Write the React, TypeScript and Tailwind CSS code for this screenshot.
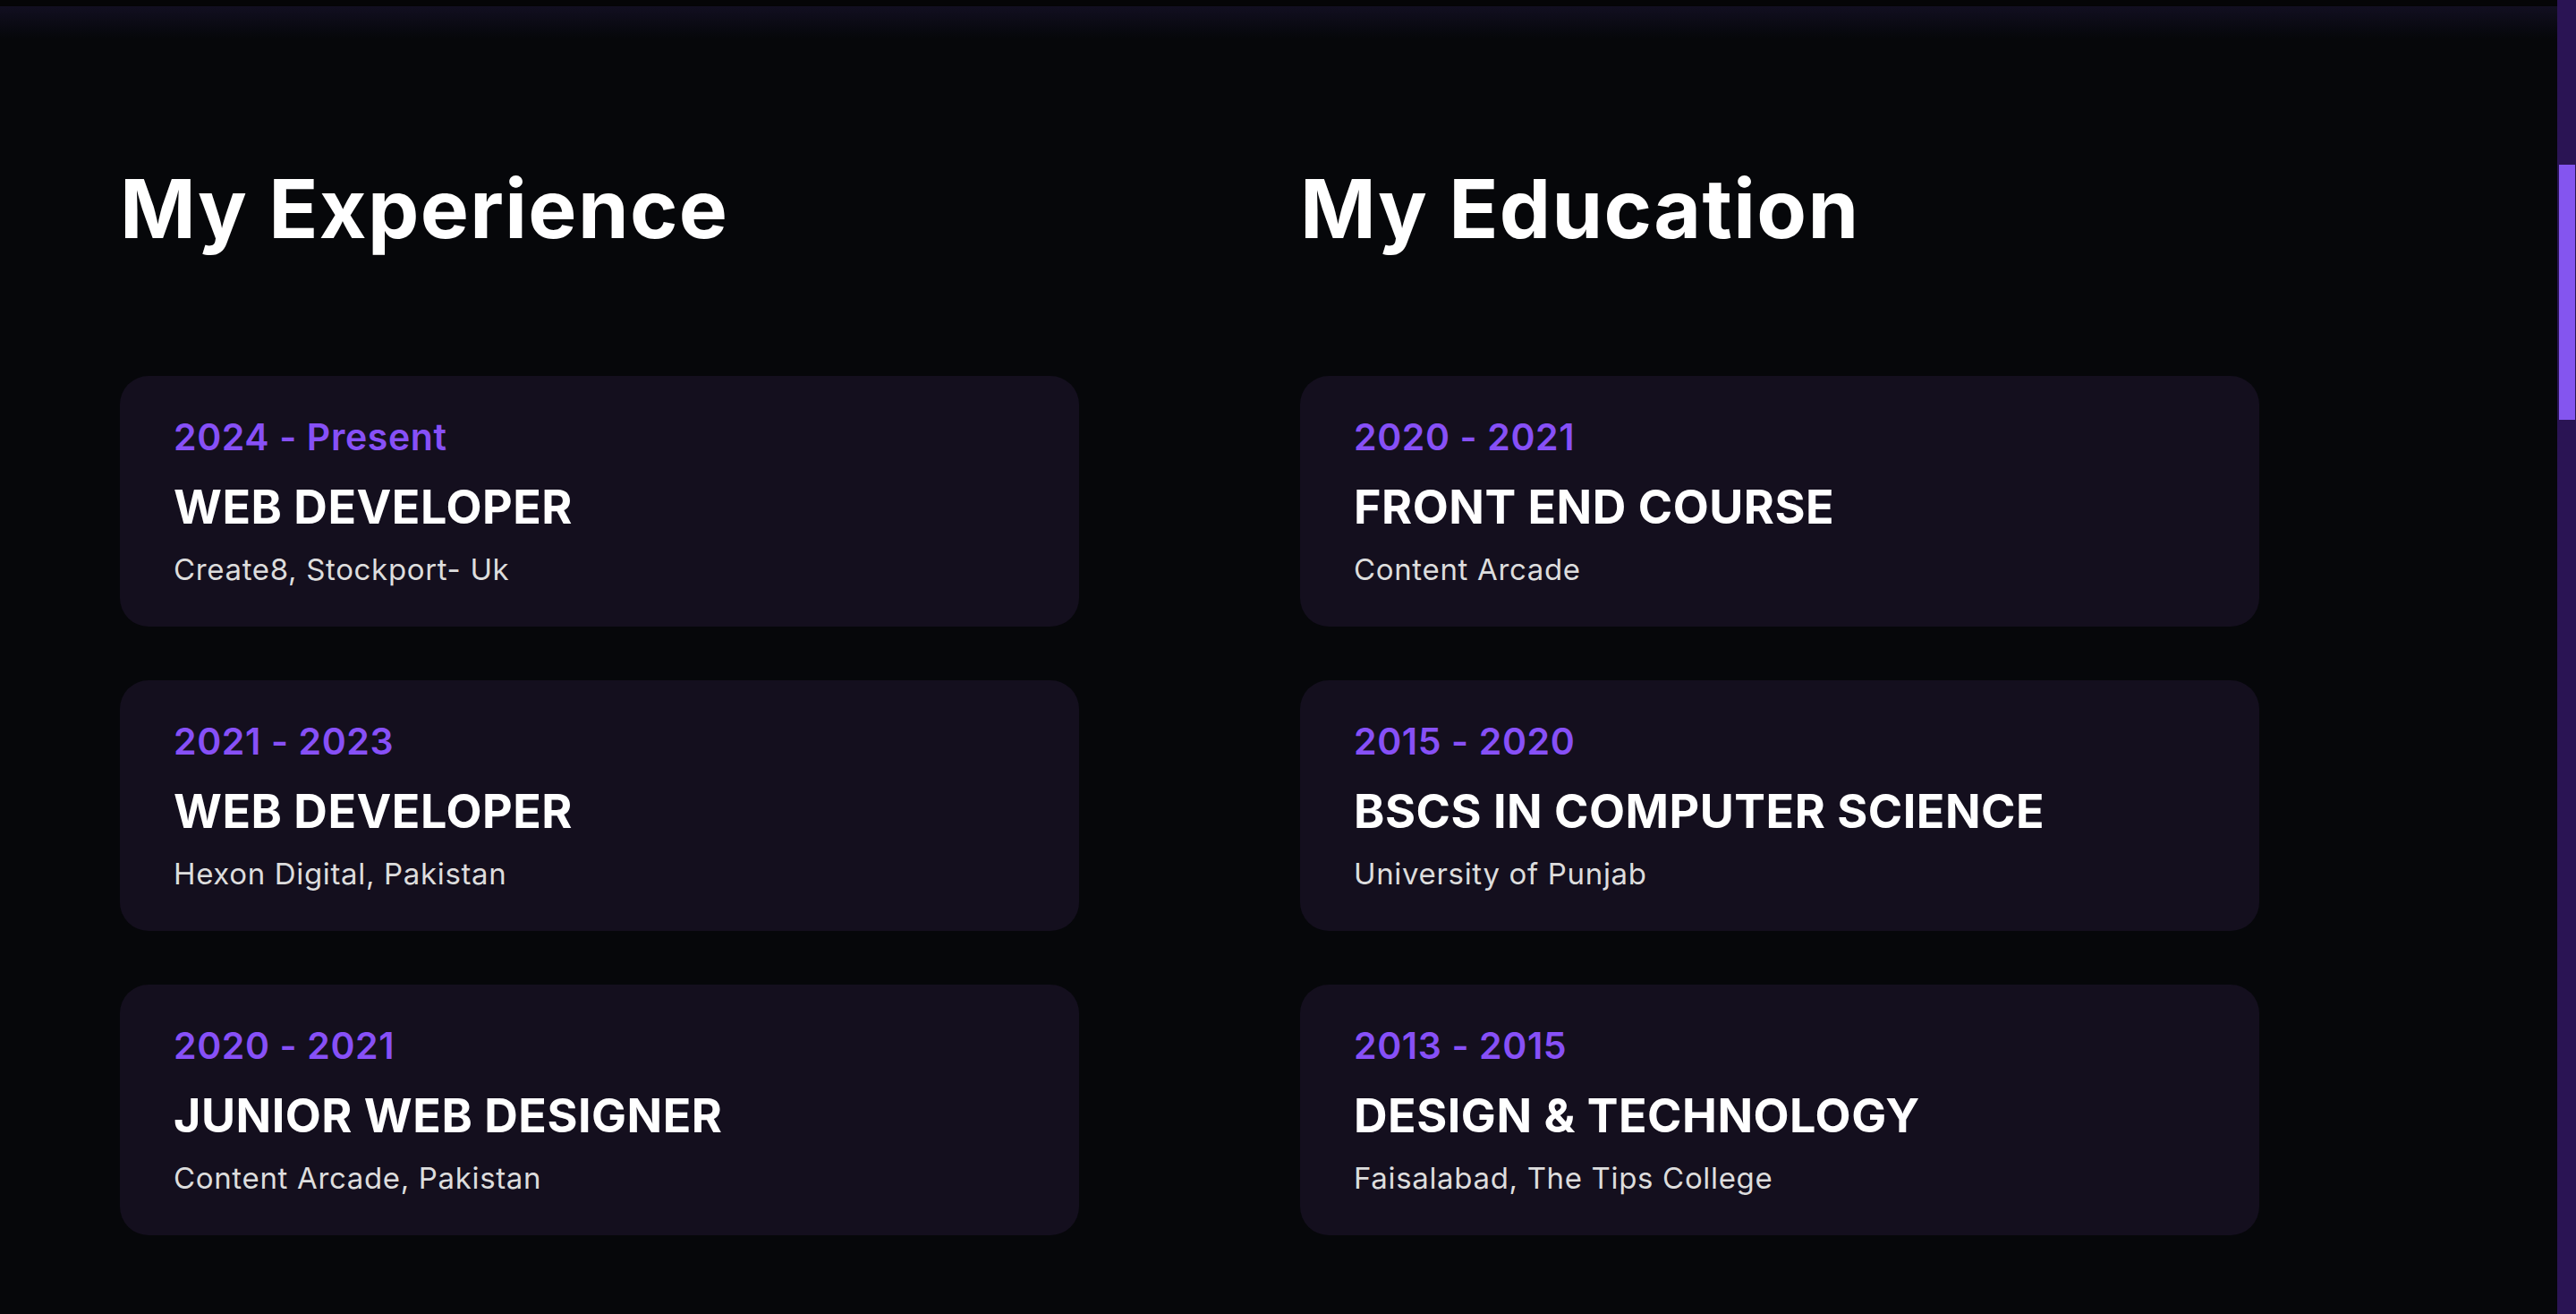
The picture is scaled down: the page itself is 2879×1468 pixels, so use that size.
const experience = [
  { date: "2024 - Present", title: "WEB DEVELOPER", place: "Create8, Stockport- Uk" },
  { date: "2021 - 2023", title: "WEB DEVELOPER", place: "Hexon Digital, Pakistan" },
  { date: "2020 - 2021", title: "JUNIOR WEB DESIGNER", place: "Content Arcade, Pakistan" },
];

const education = [
  { date: "2020 - 2021", title: "FRONT END COURSE", place: "Content Arcade" },
  { date: "2015 - 2020", title: "BSCS IN COMPUTER SCIENCE", place: "University of Punjab" },
  { date: "2013 - 2015", title: "DESIGN & TECHNOLOGY", place: "Faisalabad, The Tips College" },
];

type Item = { date: string; title: string; place: string };

function ResumeCard({ item }: { item: Item }) {
  return (
    <div className="w-[1072px] rounded-[32px] bg-[#140f1e] pl-[60px] pt-[48px] pb-[47px]">
      <p className="text-[41px] leading-none font-semibold tracking-[0.015em] text-[#8750f7]">{item.date}</p>
      <h3 className="mt-[32px] text-[52px] leading-none font-bold tracking-[0.01em] text-white">{item.title}</h3>
      <p className="mt-[27px] text-[33px] leading-none tracking-[0.02em] text-[#dddddd]">{item.place}</p>
    </div>
  );
}

function Column({ heading, items }: { heading: string; items: Item[] }) {
  return (
    <div className="flex flex-col">
      <h2 className="text-[91px] leading-none font-bold tracking-[0.015em] text-white">{heading}</h2>
      <div className="mt-[141px] flex flex-col gap-[60px]">
        {items.map((item, index) => (
          <ResumeCard key={index} item={item} />
        ))}
      </div>
    </div>
  );
}

export default function App() {
  return (
    <div className="flex h-[1468px] w-full overflow-hidden bg-[#06070a] font-['Inter',sans-serif]">
      <main className="flex-1 flex flex-col">
        <div className="h-[7px] bg-[#050507]" />
        <div className="h-[36px] bg-gradient-to-b from-[#120f21] to-[#06070a]" />
        <section className="grid grid-cols-[1072px_1072px] gap-x-[247px] pl-[134px] pt-[145px]">
          <Column heading="My Experience" items={experience} />
          <Column heading="My Education" items={education} />
        </section>
      </main>
      <div className="w-[21px] shrink-0 bg-[#2a1454] pt-[184px]">
        <div className="ml-[2px] h-[285px] w-[18px] bg-[#8455ef]" />
      </div>
    </div>
  );
}
